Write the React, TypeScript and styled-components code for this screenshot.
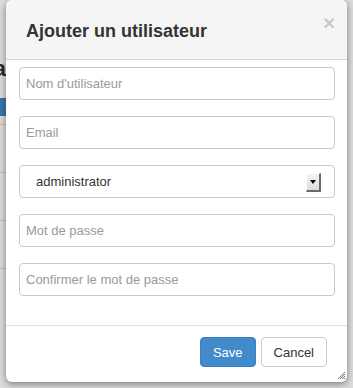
import styled, { createGlobalStyle } from "styled-components";

const GlobalStyle = createGlobalStyle`
    html, body {
        margin: 0;
        padding: 0;
        background: #dcdcdc;
        font-family: "Liberation Sans", Arial, sans-serif;
    }
    * {
        box-sizing: border-box;
    }
`;

const fields = [
    { placeholder: "Nom d'utilisateur", type: "text" },
    { placeholder: "Email", type: "email" },
];

const passwords = [
    { placeholder: "Mot de passe" },
    { placeholder: "Confirmer le mot de passe" },
];

const App = () => {
    return (
        <Screen>
            <GlobalStyle />
            {/* page under the backdrop, only its left edge shows */}
            <Page>
                <PageHeading>Utilisateurs</PageHeading>
                <PageButton>Ajouter</PageButton>
                <PageRow />
                <PageRow />
                <PageRow />
                <PageRow />
            </Page>
            <Overlay>
                <Modal>
                    <Header>
                        <Title>Ajouter un utilisateur</Title>
                        <Close>×</Close>
                    </Header>
                    <Body>
                        {fields.map((f) => (
                            <Input key={f.placeholder} type={f.type} placeholder={f.placeholder} />
                        ))}
                        <SelectBox>
                            <SelectValue>administrator</SelectValue>
                            <SelectArrow>
                                <svg width="6" height="4" viewBox="0 0 6 4">
                                    <path d="M0 0 L6 0 L3 4 Z" fill="#000" />
                                </svg>
                            </SelectArrow>
                        </SelectBox>
                        {passwords.map((p) => (
                            <Input key={p.placeholder} type="password" placeholder={p.placeholder} />
                        ))}
                    </Body>
                    <Footer>
                        <Button $primary>Save</Button>
                        <Button>Cancel</Button>
                        <Grip>
                            <svg width="8" height="8" viewBox="0 0 8 8">
                                <path d="M8 1 L1 8 M8 3 L3 8 M8 5 L5 8 M8 7 L7 8" stroke="#555" strokeWidth="0.8" />
                            </svg>
                        </Grip>
                    </Footer>
                </Modal>
            </Overlay>
        </Screen>
    );
};

const Screen = styled.div`
    position: relative;
    width: 353px;
    height: 388px;
    overflow: hidden;
    background: #dcdcdc;
`;

const Page = styled.div`
    display: flex;
    flex-direction: column;
    padding: 0 0 0 0;
    margin-left: -60px;
    width: 200px;
`;

const PageHeading = styled.h1`
    margin: 56px 0 16px;
    font-size: 22px;
    font-weight: bold;
    color: #2a2a2a;
`;

const PageButton = styled.div`
    height: 18px;
    width: 80px;
    background: #3a75a8;
    margin-bottom: 8px;
`;

const PageRow = styled.div`
    height: 48px;
    border-top: 1px solid #bcbcbc;
`;

const Overlay = styled.div`
    position: absolute;
    inset: 0;
    display: flex;
    align-items: flex-start;
    padding: 0 6px;
`;

const Modal = styled.div`
    position: relative;
    width: 341px;
    height: 382px;
    background: #fff;
    border-radius: 6px;
    box-shadow: 0 2px 7px rgba(0, 0, 0, 0.45);
    display: flex;
    flex-direction: column;
    overflow: hidden;
`;

const Header = styled.div`
    display: flex;
    align-items: center;
    justify-content: space-between;
    height: 60px;
    padding: 4px 12px 0 20px;
    background: #f5f5f5;
    border-bottom: 1px solid #d6d6d6;
`;

const Title = styled.h3`
    margin: 0;
    font-size: 18px;
    font-weight: bold;
    color: #333;
`;

const Close = styled.span`
    align-self: flex-start;
    margin-top: 9px;
    font-size: 20px;
    font-weight: bold;
    line-height: 1;
    color: #c8c8c8;
`;

const Body = styled.div`
    display: flex;
    flex-direction: column;
    gap: 16px;
    padding: 7px 12px 29px 13px;
    border-bottom: 1px solid #e0e0e0;
`;

const Input = styled.input`
    height: 33px;
    width: 100%;
    padding: 0 6px;
    border: 1px solid #c9c9c9;
    border-radius: 4px;
    font-family: "Liberation Sans", Arial, sans-serif;
    font-size: 13px;
    color: #555;
    outline: none;
    &::placeholder {
        color: #9a9a9a;
    }
`;

const SelectBox = styled.div`
    height: 33px;
    display: flex;
    align-items: center;
    justify-content: space-between;
    padding: 0 13px 0 16px;
    border: 1px solid #c9c9c9;
    border-radius: 4px;
`;

const SelectValue = styled.span`
    font-size: 13px;
    color: #333;
`;

const SelectArrow = styled.span`
    display: flex;
    align-items: center;
    justify-content: center;
    width: 15px;
    height: 19px;
    margin-top: 2px;
    background: linear-gradient(#f4f4f4, #dcdcdc);
    border-right: 2px solid #6a6a6a;
    border-bottom: 2px solid #6a6a6a;
    border-top: 1px solid #fff;
    border-left: 1px solid #fff;
`;

const Footer = styled.div`
    position: relative;
    flex: 1;
    display: flex;
    justify-content: flex-end;
    align-items: flex-start;
    gap: 5px;
    padding: 11px 20px 0 0;
`;

const Button = styled.button<{ $primary?: boolean }>`
    height: 30px;
    padding: 0 12px;
    border-radius: 4px;
    font-family: "Liberation Sans", Arial, sans-serif;
    font-size: 13px;
    border: 1px solid ${(p) => (p.$primary ? "#3a7fc0" : "#ccc")};
    background: ${(p) => (p.$primary ? "#428bca" : "#fff")};
    color: ${(p) => (p.$primary ? "#fff" : "#333")};
`;

const Grip = styled.span`
    position: absolute;
    right: 2px;
    bottom: 3px;
    display: flex;
`;

export default App;
